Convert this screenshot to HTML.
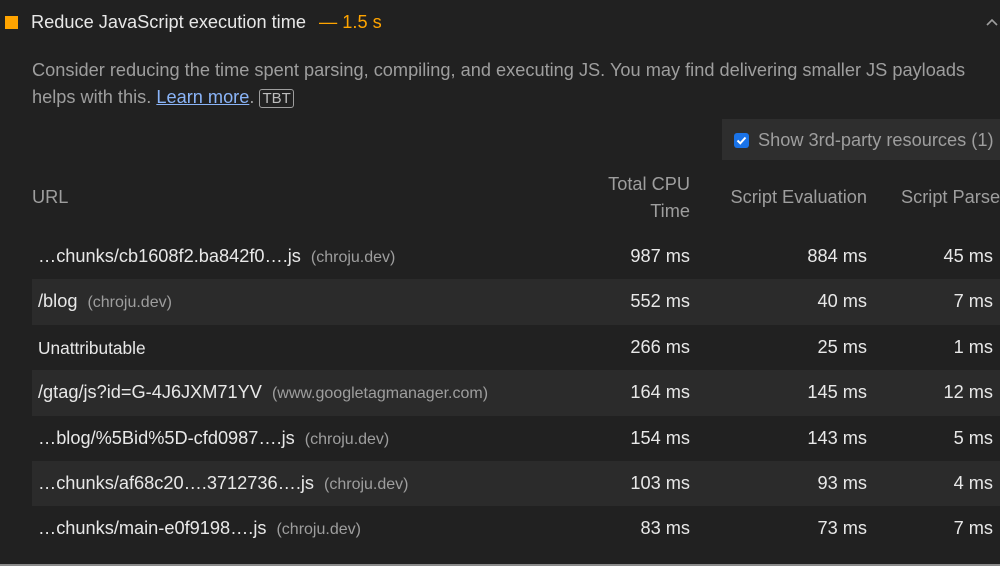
<!DOCTYPE html>
<html><head><style>
body{margin:0;width:1000px;height:566px;background:#212121;overflow:hidden;font-family:"Liberation Sans",sans-serif;position:relative;color:#e8e8e8}
.a{position:absolute;white-space:nowrap}
.row{position:absolute;left:32px;width:968px;height:45.4px}
.row.alt{background:#2b2b2b}
.u{position:absolute;left:6px;top:12px;font-size:18.2px;color:#e8e8e8}
.u span{color:#9e9e9e;font-size:16px;margin-left:10px}
.n{position:absolute;top:12px;font-size:18.2px;text-align:right}
</style></head><body>
<div class="a" style="left:5px;top:16px;width:13px;height:13px;background:#ffa400"></div>
<div class="a" style="left:31px;top:12px;font-size:18.2px;color:#e8e8e8">Reduce JavaScript execution time <span style="color:#ffa400;margin-left:8px">— 1.5 s</span></div>
<svg class="a" style="left:986px;top:18px" width="12" height="8"><path d="M1 7 L6 2 L11 7" stroke="#9e9e9e" stroke-width="1.6" fill="none"/></svg>
<div class="a" style="left:32px;top:57px;font-size:18.2px;line-height:27px;color:#9e9e9e;white-space:normal;width:960px">Consider reducing the time spent parsing, compiling, and executing JS. You may find delivering smaller JS payloads helps with this. <span style="color:#8ab4f8;text-decoration:underline">Learn more</span>. <span style="border:1px solid #9e9e9e;border-radius:3px;font-size:15px;padding:0 2px;color:#bdbdbd">TBT</span></div>
<div class="a" style="left:722px;top:119px;width:278px;height:41px;background:#2e2e2e"></div>
<div class="a" style="left:734px;top:133px;width:15px;height:15px;background:#1a73e8;border-radius:3px"><svg width="15" height="15" style="position:absolute;left:0;top:0"><path d="M3.5 7.5 L6.3 10.3 L11.5 4.5" stroke="#fff" stroke-width="2" fill="none"/></svg></div>
<div class="a" style="left:758px;top:130px;font-size:18.2px;color:#9e9e9e">Show 3rd-party resources (1)</div>
<div class="a" style="left:32px;top:187px;font-size:18.2px;color:#9e9e9e">URL</div>
<div class="a" style="right:310px;top:171px;font-size:18.2px;line-height:27px;color:#9e9e9e;text-align:right">Total CPU<br>Time</div>
<div class="a" style="right:133px;top:187px;font-size:18.2px;color:#9e9e9e">Script Evaluation</div>
<div class="a" style="left:901px;top:187px;font-size:18.2px;color:#9e9e9e">Script Parse</div>

<div class="row" style="top:234px"><div class="u">…chunks/cb1608f2.ba842f0….js<span>(chroju.dev)</span></div><div class="n" style="right:310px">987 ms</div><div class="n" style="right:133px">884 ms</div><div class="n" style="right:7px">45 ms</div></div>
<div class="row alt" style="top:279.4px"><div class="u">/blog<span>(chroju.dev)</span></div><div class="n" style="right:310px">552 ms</div><div class="n" style="right:133px">40 ms</div><div class="n" style="right:7px">7 ms</div></div>
<div class="row" style="top:324.8px"><div class="u" style="font-size:17.3px;top:13px">Unattributable</div><div class="n" style="right:310px">266 ms</div><div class="n" style="right:133px">25 ms</div><div class="n" style="right:7px">1 ms</div></div>
<div class="row alt" style="top:370.2px"><div class="u">/gtag/js?id=G-4J6JXM71YV<span>(www.googletagmanager.com)</span></div><div class="n" style="right:310px">164 ms</div><div class="n" style="right:133px">145 ms</div><div class="n" style="right:7px">12 ms</div></div>
<div class="row" style="top:415.6px"><div class="u">…blog/%5Bid%5D-cfd0987….js<span>(chroju.dev)</span></div><div class="n" style="right:310px">154 ms</div><div class="n" style="right:133px">143 ms</div><div class="n" style="right:7px">5 ms</div></div>
<div class="row alt" style="top:461px"><div class="u">…chunks/af68c20….3712736….js<span>(chroju.dev)</span></div><div class="n" style="right:310px">103 ms</div><div class="n" style="right:133px">93 ms</div><div class="n" style="right:7px">4 ms</div></div>
<div class="row" style="top:506.4px"><div class="u">…chunks/main-e0f9198….js<span>(chroju.dev)</span></div><div class="n" style="right:310px">83 ms</div><div class="n" style="right:133px">73 ms</div><div class="n" style="right:7px">7 ms</div></div>
<div class="a" style="left:0;top:564px;width:1000px;height:2px;background:#8a8a8a"></div>
</body></html>
